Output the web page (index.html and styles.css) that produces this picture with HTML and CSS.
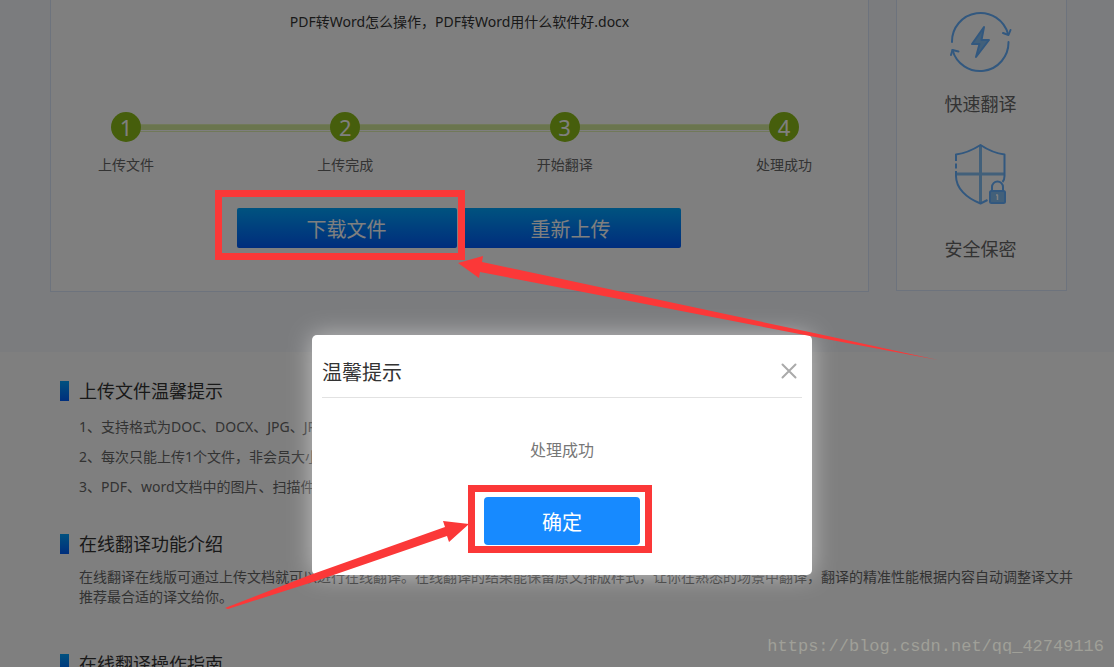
FILE: index.html
```html
<!DOCTYPE html>
<html lang="zh-CN">
<head>
    <meta charset="UTF-8">
    <meta name="viewport" content="width=device-width, initial-scale=1.0">
    <title>在线翻译</title>
    <link rel="stylesheet" href="styles.css">
</head>
<body>
    <div class="banner">
        <div class="panel">
            <p class="file-name">PDF转Word怎么操作，PDF转Word用什么软件好.docx</p>
            <ol class="steps">
                <li><span class="num">1</span><span>上传文件</span></li>
                <li><span class="num">2</span><span>上传完成</span></li>
                <li><span class="num">3</span><span>开始翻译</span></li>
                <li><span class="num">4</span><span>处理成功</span></li>
            </ol>
            <div class="buttons">
                <button type="button">下载文件</button>
                <button type="button">重新上传</button>
            </div>
        </div>
        <div class="side">
            <div class="feature">
                <svg width="64" height="64" viewBox="0 0 64 64" fill="none" stroke="#64b0ff" stroke-width="2" stroke-linecap="round" stroke-linejoin="round">
                    <path d="M3 33a28.500 28.500 0 0 1 56-8M59.500 33a28.500 28.500 0 0 1-56 8"/>
                    <path d="M54 24l5.500 2 2-5M2 46l1.500-5 6 1.500"/>
                    <path d="M35 18L23 35h7.500L27 48l13-17h-7.500z" fill="#84c0f5"/>
                </svg>
                <span>快速翻译</span>
            </div>
            <div class="feature">
                <svg width="64" height="64" viewBox="0 0 64 64" fill="none" stroke="#64b0ff" stroke-width="2" stroke-linejoin="round">
                    <path d="M31.500 4v57M7 32h48" stroke="#84c0f5" stroke-width="3"/>
                    <path d="M7 19v-6.500Q19 11 31.500 3q12 8 24 9.500V34q0 4-2 6M7 21.500v5M7 29v5c0 12 10 22 24.500 27.500l7-3.500"/>
                    <path d="M43 49v-4a5.500 5.500 0 0 1 11 0v4"/>
                    <rect x="41" y="49" width="15" height="12" rx="1.500" fill="#84c0f5"/>
                    <path d="M47 53h1.500v5" stroke="#ffffff" stroke-width="1.500"/>
                </svg>
                <span>安全保密</span>
            </div>
        </div>
    </div>

    <div class="intro">
        <h2>上传文件温馨提示</h2>
        <ul>
            <li>1、支持格式为DOC、DOCX、JPG、JPEG</li>
            <li>2、每次只能上传1个文件，非会员大小</li>
            <li>3、PDF、word文档中的图片、扫描件</li>
        </ul>
        <h2>在线翻译功能介绍</h2>
        <p>在线翻译在线版可通过上传文档就可以进行在线翻译。在线翻译的结果能保留原文排版样式，让你在熟悉的场景中翻译，翻译的精准性能根据内容自动调整译文并推荐最合适的译文给你。</p>
        <h2>在线翻译操作指南</h2>
    </div>

    <div class="mask">
        <div class="dialog" role="dialog" aria-labelledby="dialog-title">
            <div class="dialog-head">
                <h3 id="dialog-title">温馨提示</h3>
                <button type="button" class="close" aria-label="关闭">
                    <svg width="16" height="16" viewBox="0 0 16 16" stroke="#aaaaaa" stroke-width="2" stroke-linecap="round"><path d="M1.500 1.500l13 13M14.500 1.500l-13 13"/></svg>
                </button>
            </div>
            <p>处理成功</p>
            <button type="button" class="confirm">确定</button>
        </div>
    </div>

    <!-- red marks drawn over the page -->
    <svg class="marks" width="1114" height="667" viewBox="0 0 1114 667" fill="#fb3838">
        <rect x="218.500" y="193.500" width="243" height="63" fill="none" stroke="#fb3838" stroke-width="7"/>
        <rect x="471.500" y="488.500" width="177" height="61" fill="none" stroke="#fb3838" stroke-width="7"/>
        <path d="M458 263L483 256L482 262L814 333L938 360L810 336L480 272L479 278Z"/>
        <path d="M469 524L443 521L445 527L310 575L225 608L228 609L316 581L447 536L449 542Z"/>
    </svg>
    <span class="watermark">https://blog.csdn.net/qq_42749116</span>
</body>
</html>
```
FILE: styles.css
```css
* { margin: 0; padding: 0; box-sizing: border-box; }
body {
    position: relative;
    height: 100vh;
    overflow: hidden;
    background: #fff;
    color: #666;
    font: 14px "Noto Sans", "Noto Sans CJK SC", sans-serif;
}
ol, ul { list-style: none; }
button { border: none; font-family: inherit; cursor: pointer; }

.banner {
    display: flex;
    align-items: flex-start;
    gap: 27px;
    height: 352px;
    padding: 0 47px 0 50px;
    background: #f7f9fd;
}
.panel {
    flex: 1;
    height: 292px;
    background: #fff;
    border: 1px solid #dbe6fa;
    border-top: none;
}
.file-name {
    padding-top: 12px;
    line-height: 20px;
    color: #333;
    text-align: center;
}
.steps {
    position: relative;
    display: flex;
    justify-content: space-between;
    margin-top: 80px;
    padding: 0 56px 0 47px;
}
/* bar behind the numbers */
.steps::before {
    content: "";
    position: absolute;
    top: 12px;
    left: 75px;
    right: 84px;
    height: 5px;
    padding-bottom: 1px;
    border: solid #e2f2b4;
    border-width: 1px 0;
    background: #d4ea9c content-box;
}
.steps li {
    position: relative;
    display: flex;
    flex-direction: column;
    align-items: center;
    gap: 13px;
    line-height: 20px;
}
.num {
    width: 30px;
    height: 30px;
    border-radius: 50%;
    background: #8cbc18;
    color: #fff;
    font-size: 22px;
    line-height: 30px;
    text-align: center;
}
.buttons {
    display: flex;
    justify-content: center;
    gap: 4px;
    margin-top: 33px;
    padding-right: 2px;
}
.buttons button {
    width: 220px;
    height: 40px;
    border-radius: 2px;
    background: linear-gradient(#00a6ff, #005afa);
    color: #fff;
    font-size: 20px;
}

.side {
    display: flex;
    flex-direction: column;
    gap: 25px;
    width: 171px;
    height: 291px;
    padding: 9px 2px 0 0;
    background: #fff;
    border: 1px solid #dbe6fa;
    border-top: none;
}
.feature {
    display: flex;
    flex-direction: column;
    align-items: center;
    gap: 18px;
    font-size: 18px;
    line-height: 26px;
}
.feature + .feature { gap: 30px; }

.intro { padding: 29px 36px 0 60px; }
.intro h2 {
    padding-left: 10px;
    border-left: 9px solid;
    border-image: linear-gradient(#00a6ff, #005afa) 1;
    color: #333;
    font-size: 18px;
    font-weight: normal;
    line-height: 20px;
}
.intro ul {
    margin: 11px 0 32px;
    padding-left: 19px;
    line-height: 30px;
}
.intro p {
    margin: 13px 0 47px;
    padding-left: 19px;
    line-height: 20px;
}

.mask {
    position: absolute;
    inset: 0;
    display: flex;
    justify-content: center;
    align-items: flex-start;
    padding: 335px 0 0 10px;
    background: rgba(0, 0, 0, 0.5);
}
.dialog {
    display: flex;
    flex-direction: column;
    align-items: center;
    width: 500px;
    padding: 10px 10px 30px;
    border-radius: 5px;
    background: #fff;
    box-shadow: 0 0 25px rgba(255, 255, 255, 0.5);
    color: #777;
    font-size: 16px;
}
.dialog-head {
    display: flex;
    justify-content: space-between;
    align-items: center;
    align-self: stretch;
    height: 53px;
    padding-right: 5px;
    border-bottom: 1px solid #e2e2e2;
}
.dialog h3 {
    color: #333;
    font-size: 20px;
    font-weight: normal;
}
.close {
    display: flex;
    background: none;
}
.dialog p {
    margin: 40px 0 34px;
    line-height: 25px;
}
.confirm {
    width: 156px;
    height: 48px;
    border-radius: 4px;
    background: #178aff;
    color: #fff;
    font-size: 20px;
}

.marks {
    position: absolute;
    top: 0;
    left: 0;
}
.watermark {
    position: absolute;
    right: 10px;
    bottom: 9px;
    color: #a0a098;
    font: 17px/22px "Liberation Mono", monospace;
}
```
